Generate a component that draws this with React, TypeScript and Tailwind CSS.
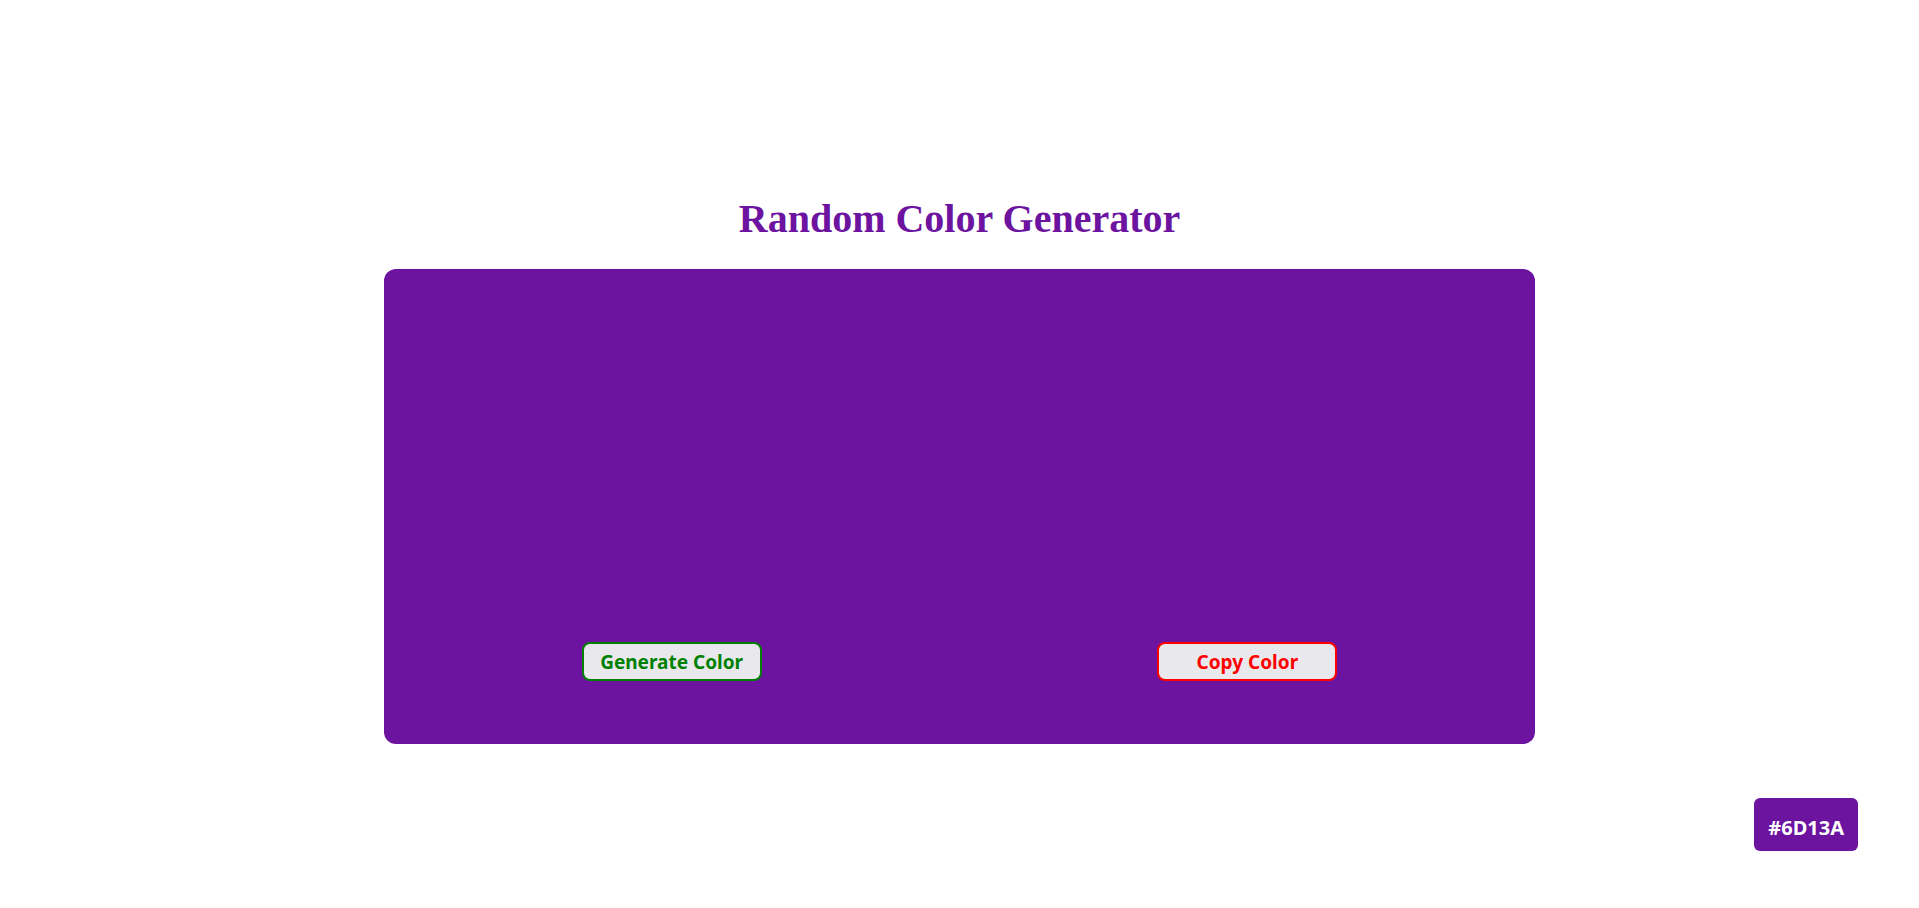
import { useState } from "react";

const buttonBase =
  "flex h-[39px] w-[180px] cursor-pointer items-center justify-center rounded-lg border-2 bg-[#e9e9ed] pt-0.5 font-['Noto_Sans',sans-serif] text-[19px] font-bold";

function randomColor() {
  return "#" + Math.floor(Math.random() * 0x1000000).toString(16).padStart(6, "0").toUpperCase();
}

export default function App() {
  const [color, setColor] = useState("#6C13A0");
  const [label, setLabel] = useState("#6D13A");

  const generate = () => {
    const next = randomColor();
    setColor(next);
    setLabel(next);
  };

  return (
    <main className="relative flex min-h-screen flex-col items-center justify-center bg-white pt-8">
      <h1
        className="mb-7 font-['Liberation_Serif',serif] text-[40px] leading-[44px] font-bold"
        style={{ color }}
      >
        Random Color Generator
      </h1>
      <section
        className="flex h-[475px] w-3/5 items-end justify-around rounded-xl pb-[63px]"
        style={{ backgroundColor: color }}
      >
        <button type="button" onClick={generate} className={`${buttonBase} border-[#008000] text-[#008000]`}>
          Generate Color
        </button>
        <button
          type="button"
          onClick={() => navigator.clipboard?.writeText(label)}
          className={`${buttonBase} border-[#ff0000] text-[#ff0000]`}
        >
          Copy Color
        </button>
      </section>
      <output
        className="absolute right-[61px] bottom-[57px] rounded-md px-[14px] pt-[15px] pb-[9px] font-['Noto_Sans',sans-serif] text-xl leading-[29px] font-bold text-white"
        style={{ backgroundColor: color }}
      >
        {label}
      </output>
    </main>
  );
}
